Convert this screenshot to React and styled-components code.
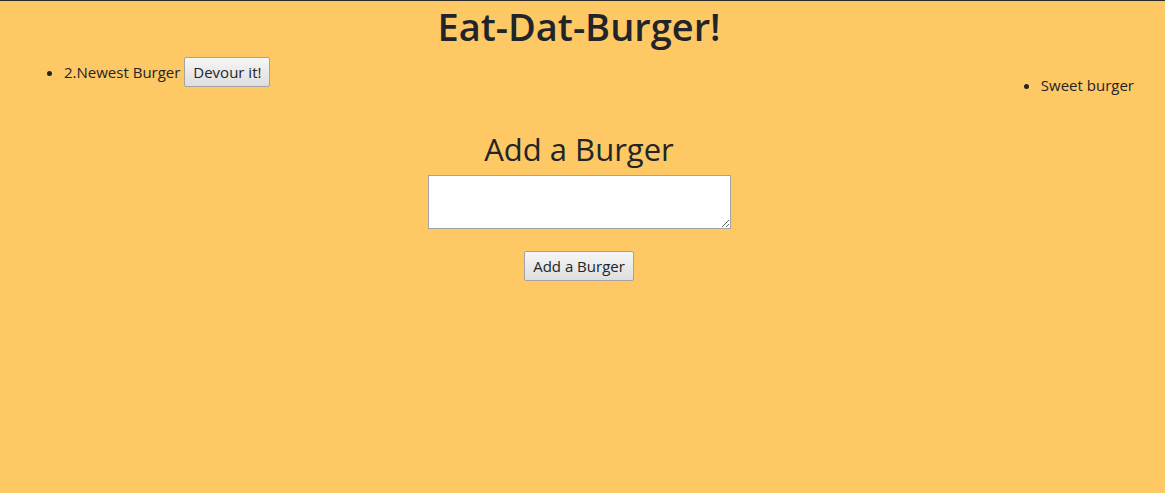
import styled, { createGlobalStyle } from 'styled-components';

const GlobalStyle = createGlobalStyle`
   html, body {
      margin: 0;
      padding: 0;
   }
   body {
      background-color: #fec864;
      color: #212529;
      font-family: 'Open Sans', sans-serif;
      font-size: 16px;
      line-height: 1.5;
      border-top: 1px solid #2b2b2b;
      min-height: 492px;
   }
`;

const burgers = [{ id: 2, name: 'Newest Burger' }];
const devoured = [{ id: 1, name: 'Sweet burger' }];

function App() {
   return (
      <>
         <GlobalStyle />
         <Page>
            <Title>Eat-Dat-Burger!</Title>
            <Lists>
               <BurgerList>
                  {burgers.map((b) => (
                     <Item key={b.id}>
                        {b.id}.{b.name} <Button>Devour it!</Button>
                     </Item>
                  ))}
               </BurgerList>
               <DevouredList>
                  {devoured.map((b) => (
                     <Item key={b.id}>{b.name}</Item>
                  ))}
               </DevouredList>
            </Lists>
            <Form>
               <SubTitle>Add a Burger</SubTitle>
               <TextArea />
               <Button>Add a Burger</Button>
            </Form>
         </Page>
      </>
   );
}

export default App;

const Page = styled.div`
   padding: 0 19px 0 12px;
`;

const Title = styled.h1`
   margin: 0;
   text-align: center;
   font-size: 38px;
   font-weight: 600;
   line-height: 1.2;
   padding-top: 3px;
`;

const Lists = styled.div`
   display: flex;
   justify-content: space-between;
`;

const BurgerList = styled.ul`
   margin: 0;
   padding-left: 52px;
   padding-top: 7px;
`;

const DevouredList = styled.ul`
   margin: 0;
   padding: 24px 12px 0 0;
`;

const Item = styled.li`
   font-size: 15px;
`;

const Button = styled.button`
   font-family: inherit;
   font-size: 15px;
   color: #212529;
   padding: 4px 8px;
   border: 1px solid #a3a3a3;
   border-radius: 2px;
   background: linear-gradient(#f6f6f6, #dedede);
`;

const Form = styled.div`
   display: flex;
   flex-direction: column;
   align-items: center;
   padding-top: 35px;
`;

const SubTitle = styled.h2`
   margin: 0 0 7px;
   font-size: 31px;
   font-weight: 500;
   line-height: 1.2;
`;

const TextArea = styled.textarea`
   width: 297px;
   height: 48px;
   border: 1px solid #a3a3a3;
   margin-bottom: 22px;
`;
